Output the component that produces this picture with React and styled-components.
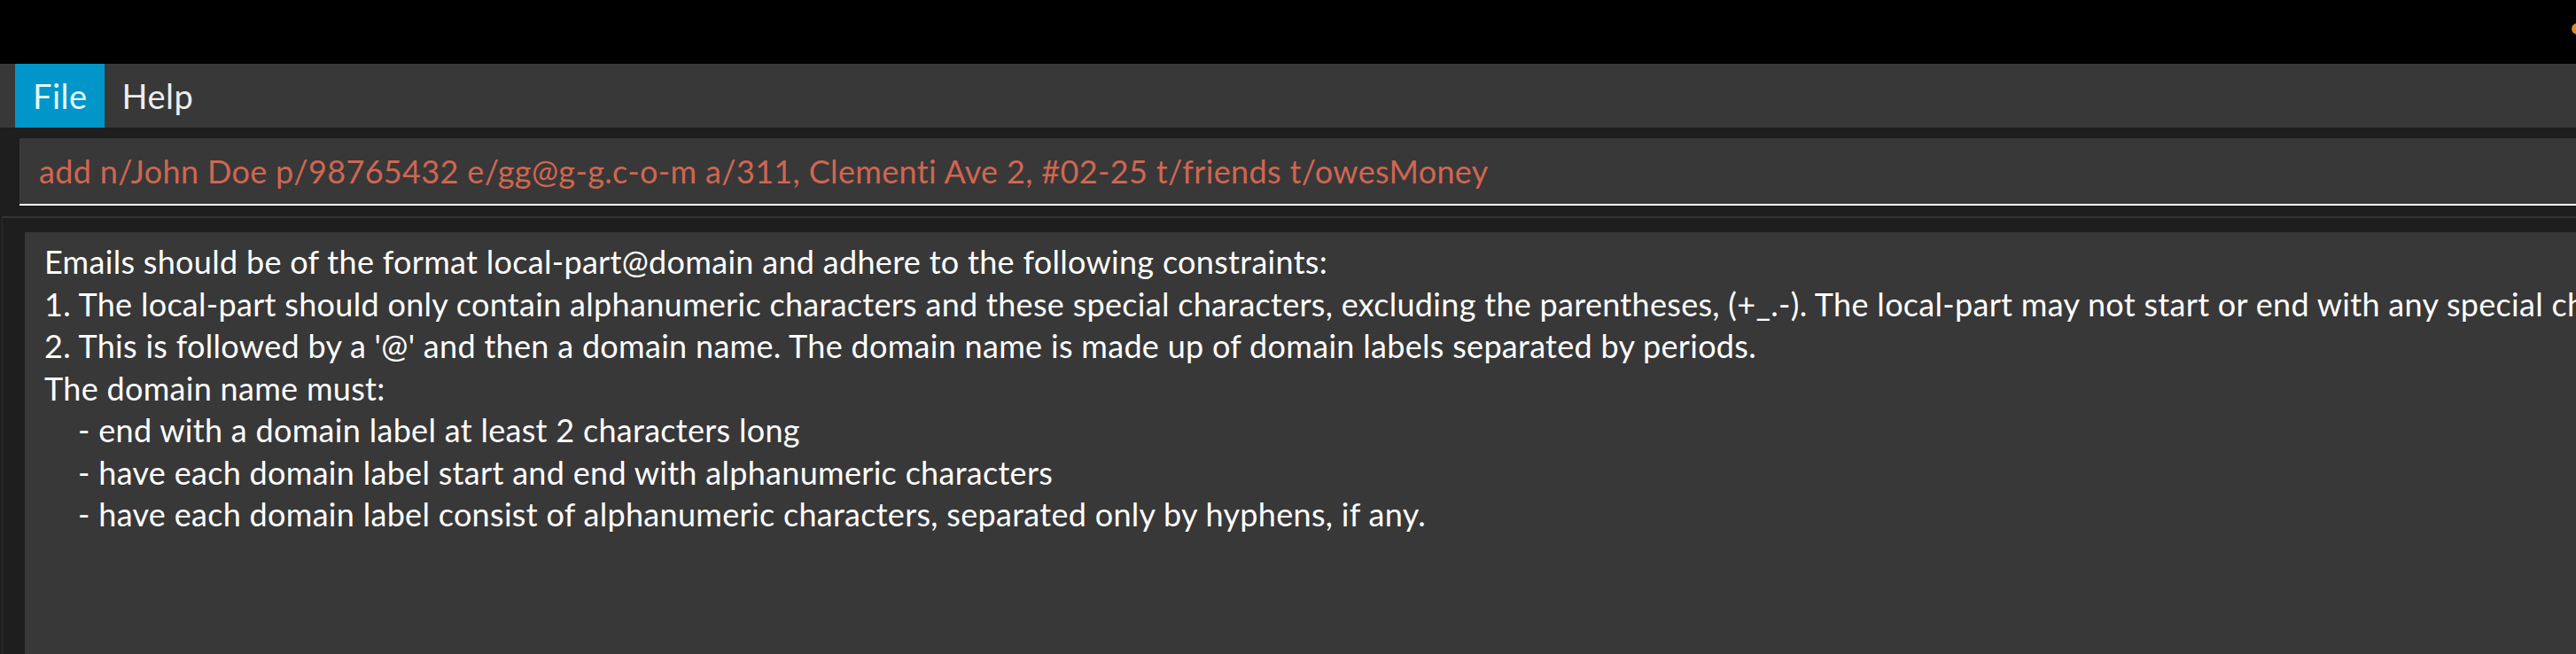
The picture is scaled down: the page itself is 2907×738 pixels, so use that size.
import React from "react";
import styled, { createGlobalStyle } from "styled-components";

const GlobalStyle = createGlobalStyle`
    html, body {
        margin: 0;
        padding: 0;
        background: #1e1e1e;
        overflow: hidden;
    }
    body {
        font-family: Lato, "Open Sans", sans-serif;
        font-variant-ligatures: none;
    }
`;

const Window = styled.div`
    width: 2907px;
    height: 738px;
    display: flex;
    flex-direction: column;
    background: #1e1e1e;
    overflow: hidden;
`;

const TitleBar = styled.div`
    height: 72px;
    flex: none;
    background: #000;
    display: flex;
    justify-content: flex-end;
    align-items: flex-start;
    padding-top: 26px;
    box-sizing: border-box;
`;

const StatusDot = styled.span`
    width: 13px;
    height: 13px;
    border-radius: 50%;
    background: #d8892e;
    margin-right: -8px;
`;

const MenuBar = styled.div`
    height: 72px;
    flex: none;
    background: #383838;
    display: flex;
    padding-left: 17px;
`;

const MenuItem = styled.div`
    padding: 0 19px 0 20px;
    line-height: 72px;
    font-size: 38px;
    letter-spacing: 0.5px;
    color: ${(p) => (p.active ? "#e6f5fb" : "#eeeeee")};
    background: ${(p) => (p.active ? "#0096c9" : "transparent")};
`;

const CommandArea = styled.div`
    flex: none;
    padding: 12px 0 12px 22px;
`;

const CommandBox = styled.div`
    height: 74px;
    background: #383838;
    border-bottom: 2px solid #ffffff;
    padding-left: 22px;
    line-height: 74px;
    font-size: 36px;
    letter-spacing: 0.35px;
    color: #d06651;
    white-space: pre;
    overflow: hidden;
`;

const ResultArea = styled.div`
    flex: 1;
    margin-left: 2px;
    border-top: 2px solid #333333;
    border-left: 1px solid #2a2a2a;
    padding: 16px 0 0 25px;
    display: flex;
    min-height: 0;
`;

const ResultBox = styled.div`
    flex: 1;
    background: #383838;
    padding: 10px 22px;
    font-size: 36px;
    line-height: 47.5px;
    letter-spacing: 0.3px;
    color: #ffffff;
    white-space: pre;
    overflow: hidden;
`;

const ResultLine = styled.div``;

const command =
    "add n/John Doe p/98765432 e/gg@g-g.c-o-m a/311, Clementi Ave 2, #02-25 t/friends t/owesMoney";

const resultLines = [
    "Emails should be of the format local-part@domain and adhere to the following constraints:",
    "1. The local-part should only contain alphanumeric characters and these special characters, excluding the parentheses, (+_.-). The local-part may not start or end with any special characters.",
    "2. This is followed by a '@' and then a domain name. The domain name is made up of domain labels separated by periods.",
    "The domain name must:",
    "    - end with a domain label at least 2 characters long",
    "    - have each domain label start and end with alphanumeric characters",
    "    - have each domain label consist of alphanumeric characters, separated only by hyphens, if any.",
];

export default function App() {
    return (
        <Window>
            <GlobalStyle />
            <TitleBar>
                <StatusDot />
            </TitleBar>
            <MenuBar>
                <MenuItem active>File</MenuItem>
                <MenuItem>Help</MenuItem>
            </MenuBar>
            <CommandArea>
                <CommandBox>{command}</CommandBox>
            </CommandArea>
            <ResultArea>
                <ResultBox>
                    {resultLines.map((line, i) => (
                        <ResultLine key={i}>{line}</ResultLine>
                    ))}
                </ResultBox>
            </ResultArea>
        </Window>
    );
}
